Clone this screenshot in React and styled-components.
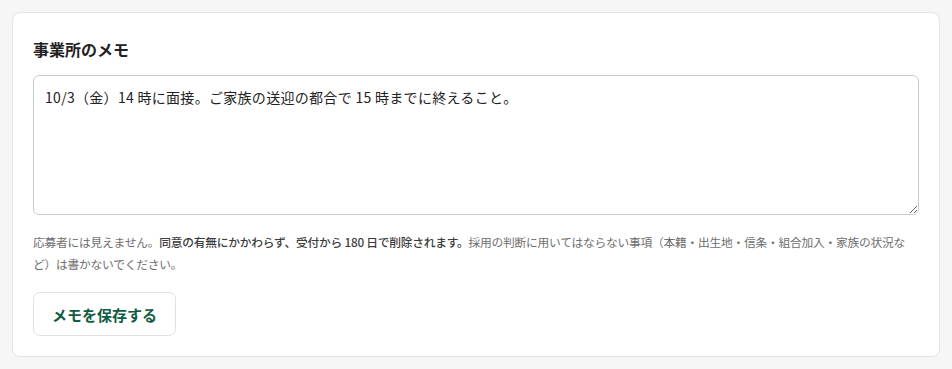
import React from 'react'
import styled, { createGlobalStyle } from 'styled-components'

const GlobalStyle = createGlobalStyle`
  html, body {
    margin: 0;
    padding: 0;
    background: #f5f6f5;
  }
  body {
    font-family: "Noto Sans CJK JP", "Noto Sans", sans-serif;
    color: #222;
  }
`

const Page = styled.div`
  padding: 12px;
`

const Card = styled.section`
  background: #fff;
  border: 1px solid #e2e4e2;
  border-radius: 8px;
  padding: 24px 20px 20px;
`

const Title = styled.h2`
  margin: 0 0 14px;
  font-size: 16px;
  line-height: 24px;
  font-weight: 700;
  color: #222;
`

const MemoArea = styled.textarea`
  display: block;
  box-sizing: border-box;
  width: 100%;
  height: 140px;
  margin: 0;
  padding: 10px 11px;
  border: 1px solid #c9cdca;
  border-radius: 6px;
  font-family: inherit;
  font-size: 14px;
  line-height: 22px;
  letter-spacing: 0.3px;
  color: #222;
  resize: vertical;
  outline: none;
`

const Help = styled.p`
  margin: 16px 0 17px;
  font-size: 11.75px;
  line-height: 22px;
  letter-spacing: -0.25px;
  color: #6e6e6e;
`

const Strong = styled.span`
  color: #3c3c3c;
  font-weight: 500;
`

const SaveButton = styled.button`
  height: 44px;
  padding: 0 18px;
  background: #fff;
  border: 1px solid #dfe2df;
  border-radius: 7px;
  font-family: inherit;
  font-size: 15px;
  font-weight: 700;
  color: #115c44;
  cursor: pointer;
`

const App = () => (
  <Page>
    <GlobalStyle />
    <Card>
      <Title>事業所のメモ</Title>
      <MemoArea defaultValue='10/3（金）14 時に面接。ご家族の送迎の都合で 15 時までに終えること。' />
      <Help>
        応募者には見えません。
        <Strong>同意の有無にかかわらず、受付から 180 日で削除されます。</Strong>
        採用の判断に用いてはならない事項（本籍・出生地・信条・組合加入・家族の状況など）は書かないでください。
      </Help>
      <SaveButton type='button'>メモを保存する</SaveButton>
    </Card>
  </Page>
)

export default App
